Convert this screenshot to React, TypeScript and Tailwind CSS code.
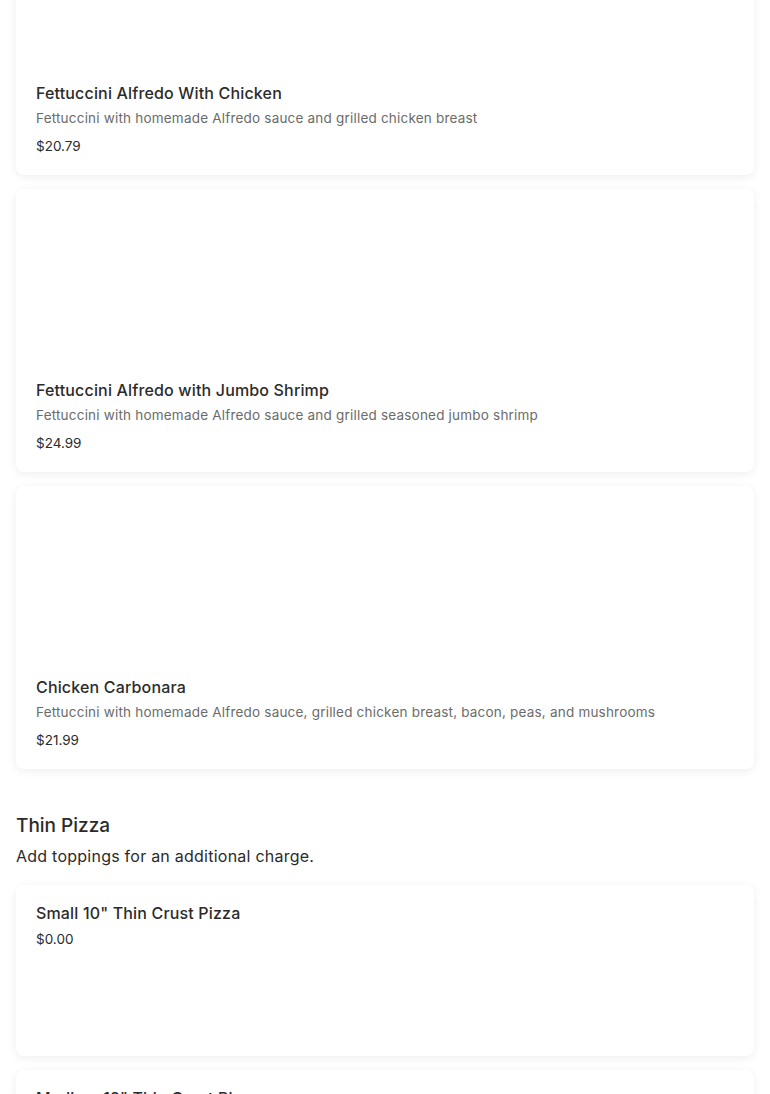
import React from 'react';

interface MenuItem {
  name: string;
  description?: string;
  price: string;
}

const pastas: MenuItem[] = [
  {
    name: 'Fettuccini Alfredo With Chicken',
    description: 'Fettuccini with homemade Alfredo sauce and grilled chicken breast',
    price: '$20.79',
  },
  {
    name: 'Fettuccini Alfredo with Jumbo Shrimp',
    description: 'Fettuccini with homemade Alfredo sauce and grilled seasoned jumbo shrimp',
    price: '$24.99',
  },
  {
    name: 'Chicken Carbonara',
    description: 'Fettuccini with homemade Alfredo sauce, grilled chicken breast, bacon, peas, and mushrooms',
    price: '$21.99',
  },
];

const pizzas: MenuItem[] = [
  { name: 'Small 10" Thin Crust Pizza', price: '$0.00' },
  { name: 'Medium 12" Thin Crust Pizza', price: '$0.00' },
];

const cardClass = 'rounded-lg bg-white shadow-[0_2px_10px_rgba(0,0,0,0.07)]';

const ImageCard: React.FC<{ item: MenuItem }> = ({ item }) => (
  <div className={`${cardClass} px-5 pb-[19px]`}>
    {/* image area, nothing loaded */}
    <div className="h-[189px]" />
    <h3 className="text-[16px] leading-6 font-medium text-[#2b2b2b] tracking-[0.01em]">{item.name}</h3>
    <p className="mt-[3px] text-[13.5px] leading-5 text-[#6b6b6b] tracking-[0.015em]">{item.description}</p>
    <p className="mt-[8px] text-[13.5px] leading-5 text-[#2b2b2b]">{item.price}</p>
  </div>
);

const PizzaCard: React.FC<{ item: MenuItem }> = ({ item }) => (
  <div className={`${cardClass} h-[171px] px-5 pt-4`}>
    <h3 className="text-[16px] leading-6 font-medium text-[#2b2b2b] tracking-[0.01em]">{item.name}</h3>
    <p className="mt-[4px] text-[13.5px] leading-5 text-[#2b2b2b]">{item.price}</p>
  </div>
);

export default function App() {
  return (
    <div
      className="h-[1094px] overflow-hidden bg-white px-4"
      style={{ fontFamily: 'Inter, "Noto Sans", sans-serif' }}
    >
      <div className="-mt-[108px] flex flex-col gap-[14px]">
        {pastas.map((p) => (
          <ImageCard key={p.name} item={p} />
        ))}
      </div>

      <h2 className="mt-[43px] text-[19px] leading-7 font-medium text-[#2b2b2b]">Thin Pizza</h2>
      <p className="mt-[4px] text-[16px] leading-6 text-[#2b2b2b] tracking-[0.015em]">
        Add toppings for an additional charge.
      </p>

      <div className="mt-[17px] flex flex-col gap-[14px]">
        {pizzas.map((p) => (
          <PizzaCard key={p.name} item={p} />
        ))}
      </div>
    </div>
  );
}
